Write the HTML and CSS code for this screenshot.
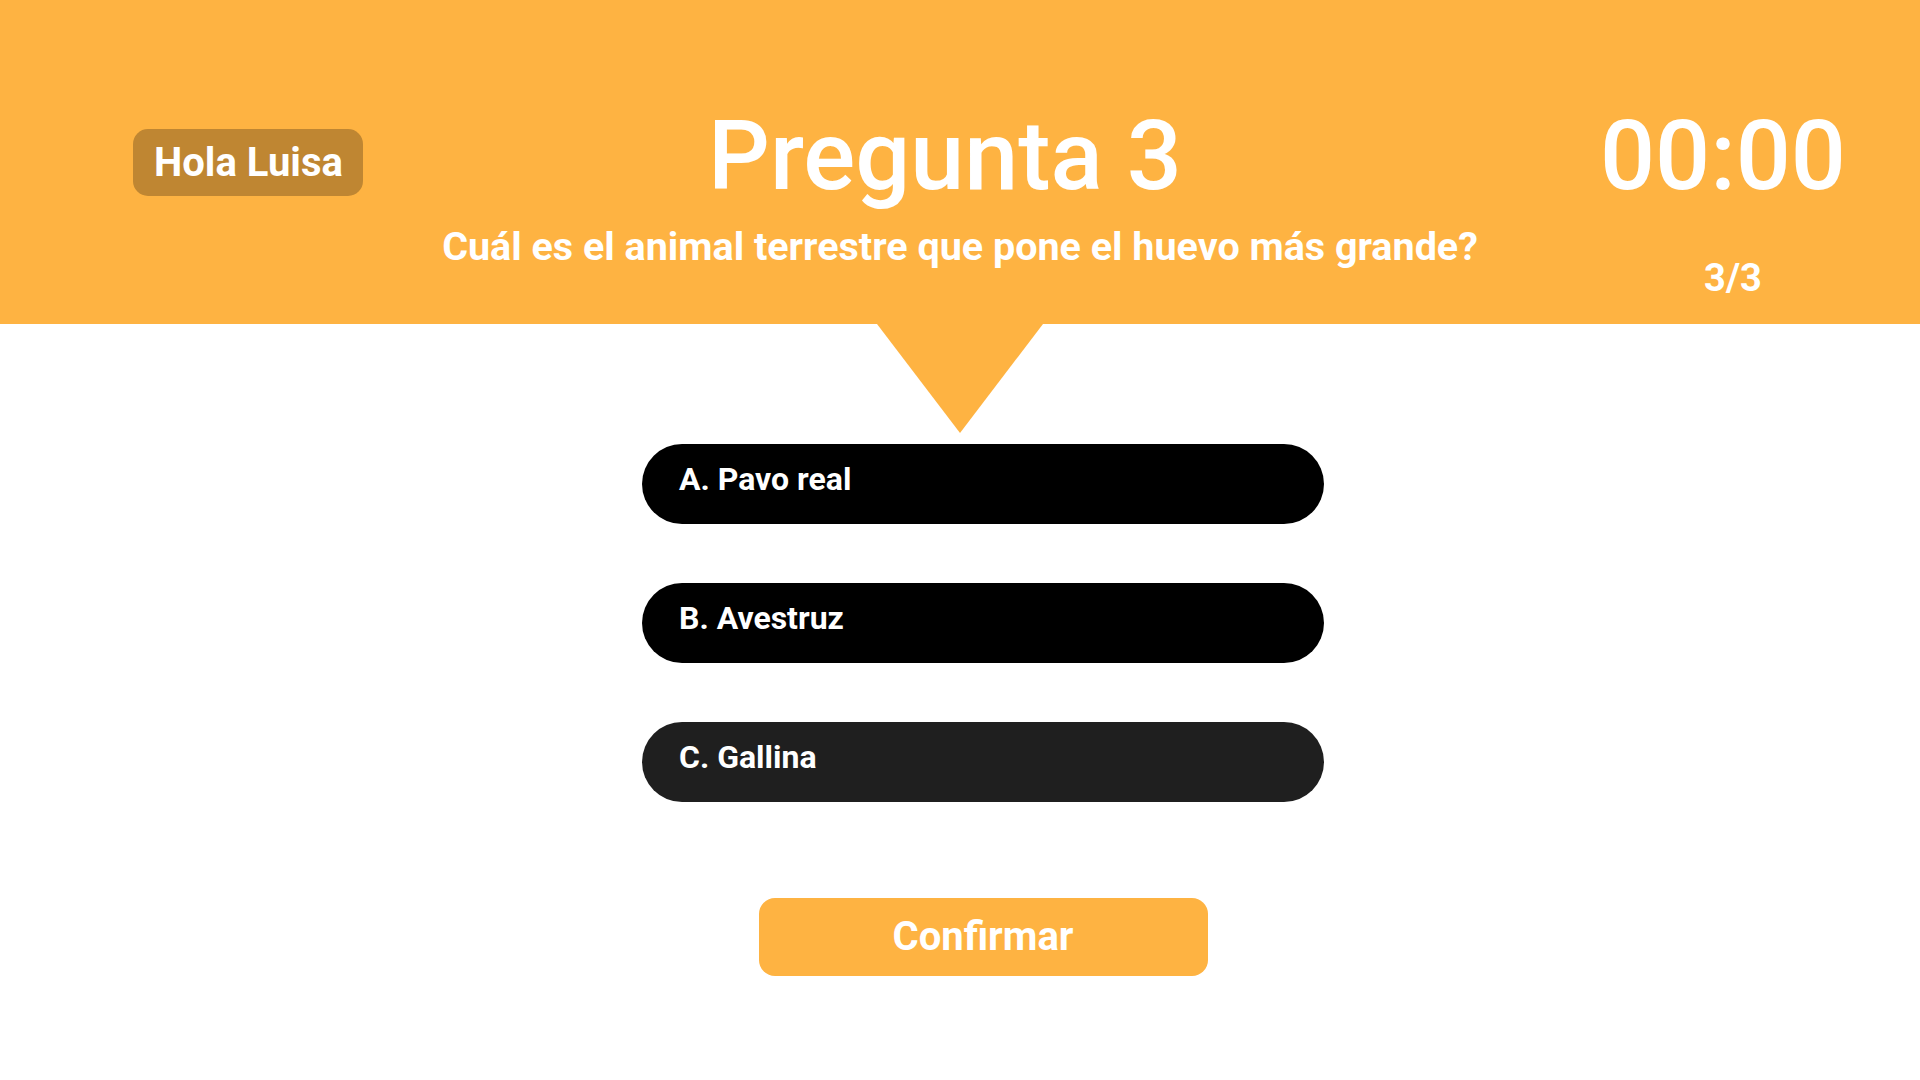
FILE: index.html
```html
<!DOCTYPE html>
<html lang="es">
<head>
<meta charset="utf-8">
<title>Pregunta 3</title>
<link rel="stylesheet" href="styles.css">
</head>
<body>
  <header class="top">
    <div class="top-left">
      <span class="greeting">Hola Luisa</span>
    </div>
    <div class="top-center">
      <h1 class="title">Pregunta 3</h1>
      <p class="question">Cuál es el animal terrestre que pone el huevo más grande?</p>
    </div>
    <div class="top-right">
      <div class="clock">
        <div class="timer">00:00</div>
        <div class="counter">3/3</div>
      </div>
    </div>
  </header>
  <div class="pointer"></div>
  <main class="content">
    <ul class="answers">
      <li class="answer">A. Pavo real</li>
      <li class="answer">B. Avestruz</li>
      <li class="answer answer-hover">C. Gallina</li>
    </ul>
    <button class="confirm" type="button">Confirmar</button>
  </main>
</body>
</html>
```
FILE: styles.css
```css
* { box-sizing: border-box; }

html, body {
  margin: 0;
  padding: 0;
  background: #ffffff;
  font-family: Roboto, "Liberation Sans", Arial, sans-serif;
  color: #ffffff;
}

.top {
  background: #feb342;
  height: 324px;
  display: grid;
  grid-template-columns: 1fr auto 1fr;
  align-items: start;
}

.top-left {
  padding-left: 133px;
  padding-top: 129px;
}

.greeting {
  display: inline-block;
  background: #bf8632;
  border-radius: 15px;
  padding: 11px 20px 11px 21px;
  font-size: 40px;
  line-height: 45px;
  font-weight: 700;
}

.top-center {
  padding-top: 108px;
  text-align: center;
}

.title {
  margin: 0 30px 0 0;
  font-size: 97px;
  line-height: 97px;
  font-weight: 500;
}

.question {
  margin: 20px 0 0;
  font-size: 39.5px;
  line-height: 44px;
  font-weight: 700;
  white-space: nowrap;
}

.top-right {
  display: flex;
  justify-content: flex-end;
  padding-right: 74px;
  padding-top: 108px;
}

.clock {
  text-align: center;
}

.timer {
  font-size: 97px;
  line-height: 97px;
  font-weight: 500;
}

.counter {
  margin-top: 51px;
  padding-left: 20px;
  font-size: 38px;
  line-height: 44px;
  font-weight: 700;
}

.pointer {
  width: 0;
  height: 0;
  margin: 0 auto;
  border-left: 83px solid transparent;
  border-right: 83px solid transparent;
  border-top: 109px solid #feb342;
}

.content {
  padding-left: 46px;
  padding-top: 11px;
  display: flex;
  flex-direction: column;
  align-items: center;
}

.answers {
  list-style: none;
  margin: 0;
  padding: 0;
  width: 682px;
  display: flex;
  flex-direction: column;
  gap: 59px;
}

.answer {
  height: 80px;
  border-radius: 40px;
  background: #000000;
  padding: 16px 37px 0;
  font-size: 32px;
  line-height: 38px;
  font-weight: 700;
}

.answer-hover {
  background: #1f1f1f;
}

.confirm {
  margin-top: 96px;
  width: 449px;
  height: 78px;
  border: none;
  border-radius: 16px;
  background: #feb342;
  color: #ffffff;
  font-family: Roboto, "Liberation Sans", Arial, sans-serif;
  font-size: 40px;
  line-height: 46px;
  font-weight: 700;
  padding: 16px 0 16px;
  cursor: pointer;
}
```
